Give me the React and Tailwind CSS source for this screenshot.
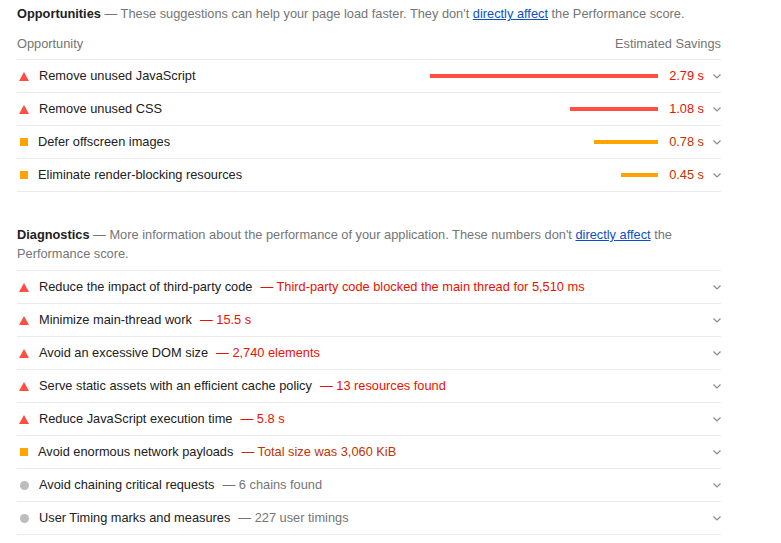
import React from 'react';

const opportunities = [
  { level: 'fail', title: 'Remove unused JavaScript', bar: 228, value: '2.79 s' },
  { level: 'fail', title: 'Remove unused CSS', bar: 88, value: '1.08 s' },
  { level: 'average', title: 'Defer offscreen images', bar: 64, value: '0.78 s' },
  { level: 'average', title: 'Eliminate render-blocking resources', bar: 37, value: '0.45 s' },
];

const diagnostics = [
  { level: 'fail', title: 'Reduce the impact of third-party code', detail: 'Third-party code blocked the main thread for 5,510 ms' },
  { level: 'fail', title: 'Minimize main-thread work', detail: '15.5 s' },
  { level: 'fail', title: 'Avoid an excessive DOM size', detail: '2,740 elements' },
  { level: 'fail', title: 'Serve static assets with an efficient cache policy', detail: '13 resources found' },
  { level: 'fail', title: 'Reduce JavaScript execution time', detail: '5.8 s' },
  { level: 'average', title: 'Avoid enormous network payloads', detail: 'Total size was 3,060 KiB' },
  { level: 'info', title: 'Avoid chaining critical requests', detail: '6 chains found' },
  { level: 'info', title: 'User Timing marks and measures', detail: '227 user timings' },
];

const textColor = {
  fail: 'text-[#eb0f00]',
  average: 'text-[#c33300]',
  info: 'text-[#757575]',
};

const StatusIcon = ({ level }) => {
  if (level === 'fail') {
    return (
      <svg width="10" height="9" viewBox="0 0 10 9" className="ml-[2px] mr-[10px] shrink-0">
        <polygon points="5,0 10,9 0,9" fill="#ff4e42" />
      </svg>
    );
  }
  if (level === 'average') {
    return <span className="ml-[3px] mr-[10px] w-[8px] h-[8px] bg-[#ffa400] shrink-0" />;
  }
  return <span className="ml-[3px] mr-[10px] w-[9px] h-[9px] rounded-full bg-[#bdbdbd] shrink-0" />;
};

const Chevron = () => (
  <svg width="8" height="5" viewBox="0 0 8 5" className="shrink-0">
    <polyline points="0.5,0.5 4,4 7.5,0.5" fill="none" stroke="#8a8a8a" strokeWidth="1.2" />
  </svg>
);

const Link = ({ children }) => (
  <a href="#" className="text-[#0c50c7] underline">{children}</a>
);

export default function App() {
  return (
    <div className="bg-white min-h-screen font-['Liberation_Sans',Arial,sans-serif] text-[12.8px] text-[#212121]">
      <div className="ml-[17px] w-[704px] pt-[4px]">
        {/* OPPORTUNITIES */}
        <p className="leading-[19px]">
          <span className="font-bold">Opportunities</span>
          <span className="text-[#757575]">
            {' '}— These suggestions can help your page load faster. They don't <Link>directly affect</Link> the Performance score.
          </span>
        </p>

        <div className="mt-[11px] pb-[6px] leading-[19px] flex justify-between text-[#757575] border-b border-[#ebebeb]">
          <span>Opportunity</span>
          <span>Estimated Savings</span>
        </div>

        {opportunities.map((o) => (
          <div key={o.title} className="h-[33px] flex items-center border-b border-[#ebebeb]">
            <StatusIcon level={o.level} />
            <span className="whitespace-nowrap">{o.title}</span>
            <div className="flex-1 flex justify-end">
              <div
                className={`h-[4px] ${o.level === 'fail' ? 'bg-[#ff4e42]' : 'bg-[#ffa400]'}`}
                style={{ width: o.bar }}
              />
            </div>
            <span className={`ml-[11px] whitespace-nowrap ${textColor[o.level]}`}>{o.value}</span>
            <div className="w-[17px] flex justify-end">
              <Chevron />
            </div>
          </div>
        ))}

        {/* DIAGNOSTICS */}
        <p className="mt-[33px] leading-[19px]">
          <span className="font-bold">Diagnostics</span>
          <span className="text-[#757575]">
            {' '}— More information about the performance of your application. These numbers don't <Link>directly affect</Link> the Performance score.
          </span>
        </p>

        <div className="mt-[7px] border-t border-[#ebebeb]">
          {diagnostics.map((d) => (
            <div key={d.title} className="h-[33px] flex items-center border-b border-[#ebebeb]">
              <StatusIcon level={d.level} />
              <span className="whitespace-nowrap">{d.title}</span>
              <span className={`ml-[8px] whitespace-nowrap ${textColor[d.level]}`}>— {d.detail}</span>
              <div className="flex-1" />
              <Chevron />
            </div>
          ))}
        </div>
      </div>
    </div>
  );
}
